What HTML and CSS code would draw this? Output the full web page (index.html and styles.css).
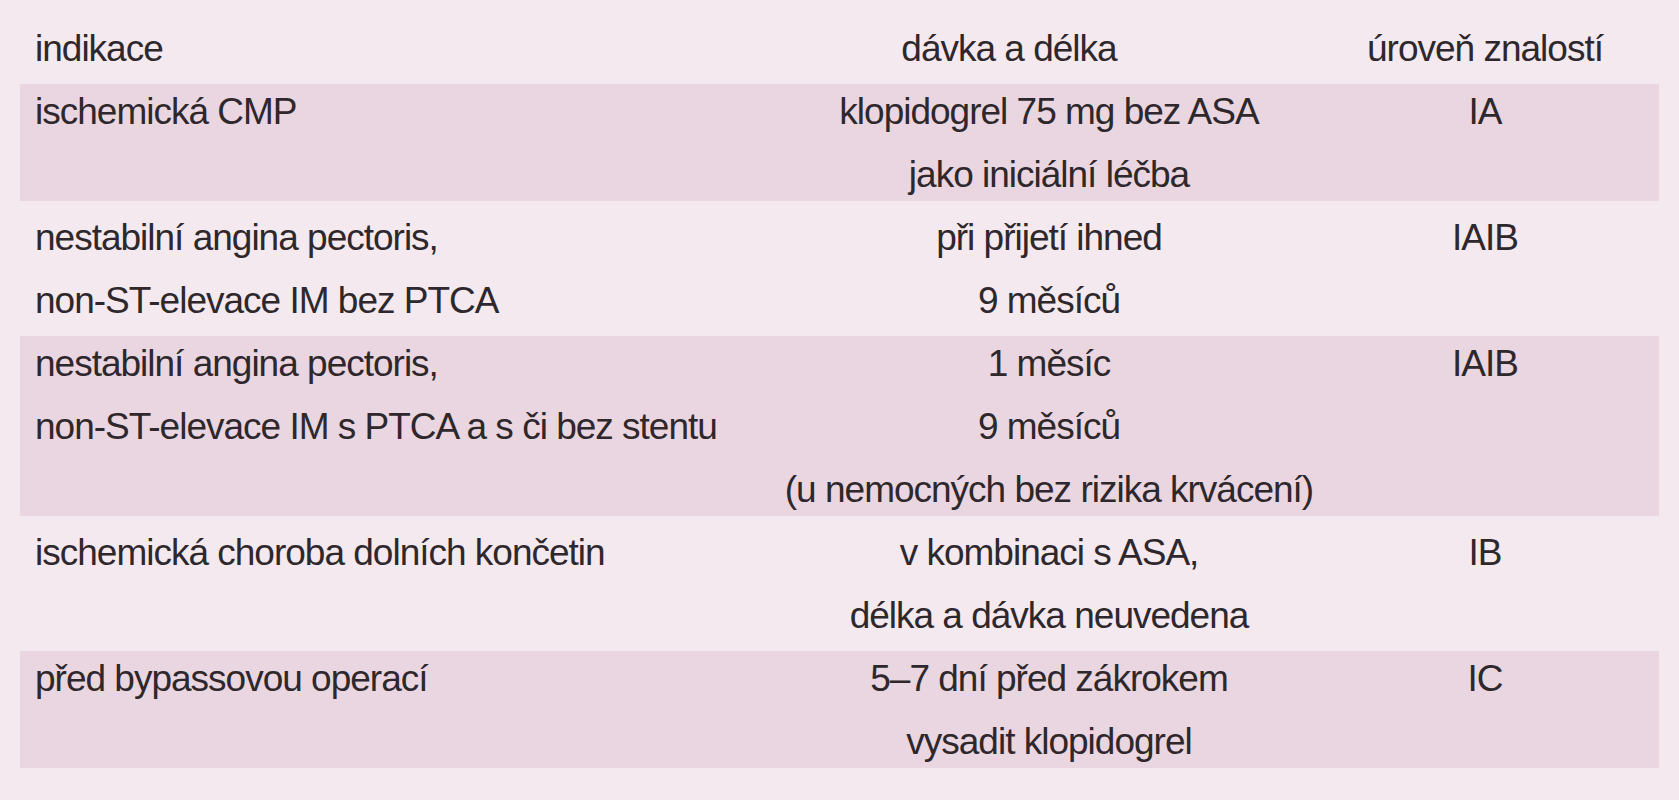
FILE: index.html
```html
<!DOCTYPE html>
<html lang="cs">
<head>
<meta charset="utf-8">
<title>Klopidogrel – indikace</title>
<link rel="stylesheet" href="styles.css">
</head>
<body>
<div class="table">
  <div class="row head">
    <div class="c1">indikace</div>
    <div class="c2 head-mid">dávka a délka</div>
    <div class="c3">úroveň znalostí</div>
  </div>
  <div class="row shade">
    <div class="c1">ischemická CMP</div>
    <div class="c2">klopidogrel 75 mg bez ASA<br>jako iniciální léčba</div>
    <div class="c3">IA</div>
  </div>
  <div class="row">
    <div class="c1">nestabilní angina pectoris,<br>non-ST-elevace IM bez PTCA</div>
    <div class="c2">při přijetí ihned<br>9 měsíců</div>
    <div class="c3">IAIB</div>
  </div>
  <div class="row shade">
    <div class="c1">nestabilní angina pectoris,<br>non-ST-elevace IM s PTCA a s či bez stentu</div>
    <div class="c2">1 měsíc<br>9 měsíců<br>(u nemocných bez rizika krvácení)</div>
    <div class="c3">IAIB</div>
  </div>
  <div class="row">
    <div class="c1">ischemická choroba dolních končetin</div>
    <div class="c2">v kombinaci s ASA,<br>délka a dávka neuvedena</div>
    <div class="c3">IB</div>
  </div>
  <div class="row shade">
    <div class="c1">před bypassovou operací</div>
    <div class="c2">5–7 dní před zákrokem<br>vysadit klopidogrel</div>
    <div class="c3">IC</div>
  </div>
</div>
</body>
</html>
```

FILE: styles.css
```css
html, body {
  margin: 0;
  padding: 0;
}

body {
  background: #f4e9ef;
  color: #2e272b;
  font-family: "Liberation Sans", Arial, sans-serif;
  font-size: 37px;
  letter-spacing: -1px;
  line-height: 63px;
  width: 1679px;
  height: 800px;
  overflow: hidden;
}

.table {
  padding-top: 17px;
  padding-left: 20px;
  width: 1639px;
}

.row {
  display: grid;
  grid-template-columns: 714px 600px 272px;
  padding-left: 15px;
}

.shade {
  background: linear-gradient(
    to bottom,
    transparent 0,
    transparent 4px,
    #e9d6e0 4px,
    #e9d6e0 calc(100% - 5px),
    transparent calc(100% - 5px)
  );
}

.c1 {
  text-align: left;
  white-space: nowrap;
}

.c2,
.c3 {
  text-align: center;
  white-space: nowrap;
}

.head-mid {
  padding-right: 80px;
}
```
